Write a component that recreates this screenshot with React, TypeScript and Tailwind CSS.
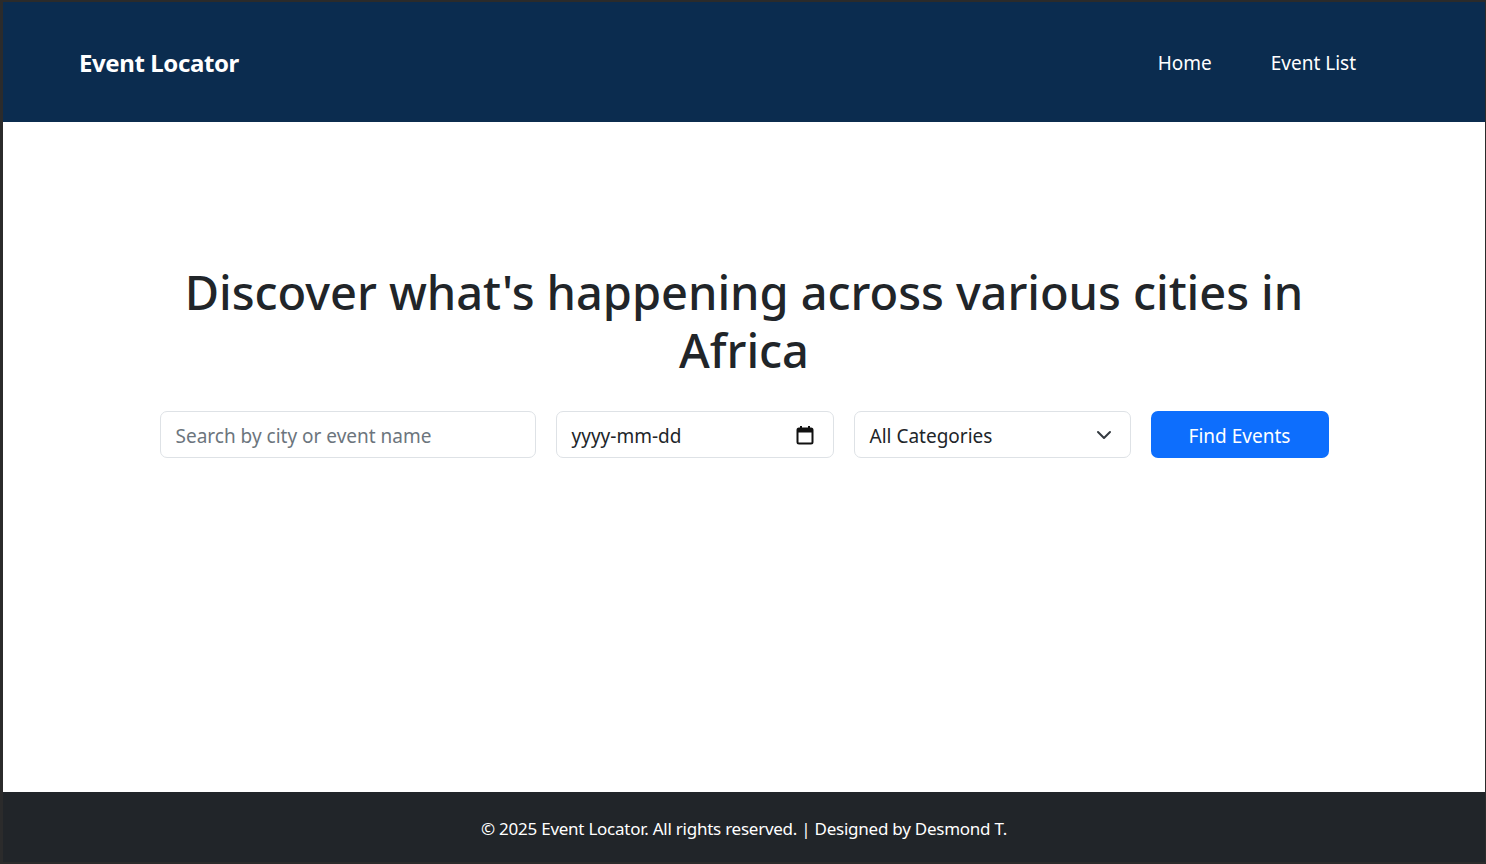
import React from 'react'

const font = { fontFamily: '"Noto Sans", "Open Sans", sans-serif' }

const CalendarIcon = () => (
  <svg width="18" height="20" viewBox="0 0 18 20" fill="none">
    <rect x="1.5" y="3.5" width="15" height="15" rx="1.5" stroke="#111" strokeWidth="2" />
    <rect x="1.5" y="3.5" width="15" height="4" fill="#111" />
    <rect x="4" y="1" width="2" height="4" fill="#111" />
    <rect x="12" y="1" width="2" height="4" fill="#111" />
  </svg>
)

const Chevron = () => (
  <svg width="16" height="16" viewBox="0 0 16 16" fill="none">
    <path d="M2 5l6 6 6-6" stroke="#343a40" strokeWidth="2" strokeLinecap="round" strokeLinejoin="round" />
  </svg>
)

const App = () => {
  return (
    <div className="w-full h-screen bg-[#2b2b2b] pt-[2px] pl-[3px] pr-px pb-[2px]" style={font}>
      <div className="h-full flex flex-col bg-white">
        <header className="h-[120px] shrink-0 bg-[#0b2c4f] flex items-center justify-between pt-[2px] pl-[76px] pr-[129px]">
          <a href="#" className="text-white text-[24px] font-bold tracking-[-0.4px]">
            Event Locator
          </a>
          <nav className="flex items-center gap-[59px] text-white text-[19px]">
            <a href="#">Home</a>
            <a href="#">Event List</a>
          </nav>
        </header>

        <main className="flex-1 flex flex-col items-center pt-[141px]">
          <h1 className="text-[#212529] text-[47px] leading-[58px] font-medium text-center max-w-[1160px] tracking-[-0.05px]">
            Discover what's happening across various cities in Africa
          </h1>
          <form className="mt-[32px] flex gap-[20px] text-[19px]">
            <input
              type="text"
              placeholder="Search by city or event name"
              className="w-[376px] h-[47px] px-[15px] pt-[3px] border border-[#dee2e6] rounded-[7px] text-[#212529] placeholder:text-[#6c757d] outline-none"
            />
            <div className="w-[278px] h-[47px] px-[15px] border border-[#dee2e6] rounded-[7px] flex items-center justify-between text-[#212529]">
              <span className="pt-[3px]">yyyy-mm-dd</span>
              <span className="mr-[4px]"><CalendarIcon /></span>
            </div>
            <div className="w-[277px] h-[47px] pl-[15px] pr-[18px] border border-[#dee2e6] rounded-[7px] flex items-center justify-between text-[#212529]">
              <span className="pt-[3px]">All Categories</span>
              <Chevron />
            </div>
            <button
              type="button"
              className="w-[178px] h-[47px] pt-[3px] bg-[#0d6efd] text-white rounded-[7px]"
            >
              Find Events
            </button>
          </form>
        </main>

        <footer className="h-[70px] shrink-0 bg-[#212529] flex items-center justify-center pt-[3px] text-white text-[17px] tracking-[-0.25px]">
          © 2025 Event Locator. All rights reserved. | Designed by Desmond T.
        </footer>
      </div>
    </div>
  )
}

export default App
